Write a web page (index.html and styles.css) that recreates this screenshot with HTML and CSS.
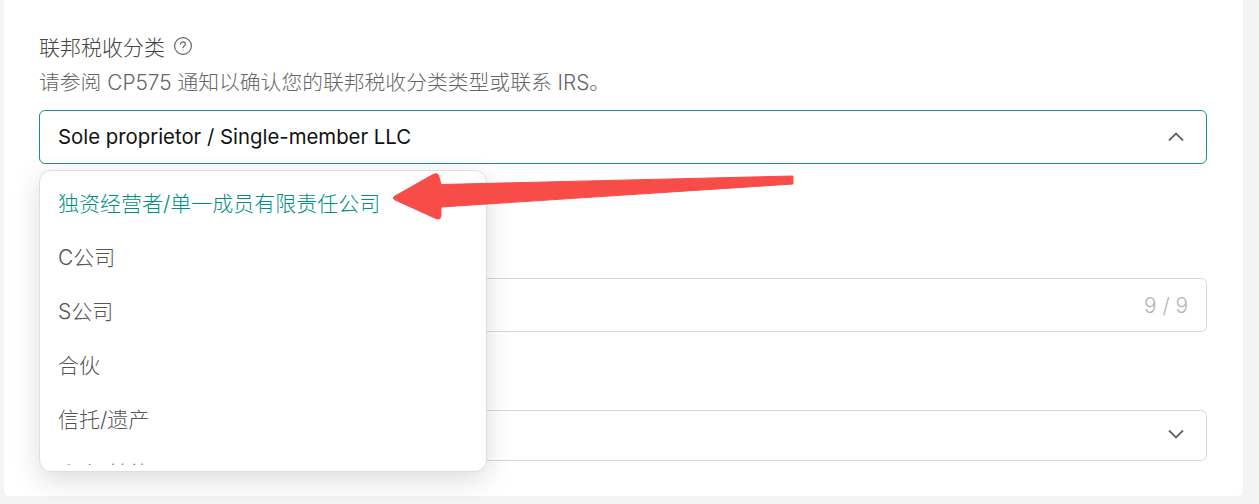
FILE: index.html
```html
<!DOCTYPE html>
<html lang="zh-CN">
<head>
    <meta charset="UTF-8">
    <meta name="viewport" content="width=device-width, initial-scale=1.0">
    <title>联邦税收分类</title>
    <link rel="stylesheet" href="styles.css">
</head>
<body>
    <div class="card">
        <div class="label-row">
            <span>联邦税收分类</span>
            <svg class="help-icon" width="20" height="20" viewBox="0 0 20 20" fill="none" stroke="#666" stroke-width="1.2">
                <circle cx="10" cy="10" r="8.4"/>
                <path d="M7.6 8.2c0-1.4 1-2.3 2.4-2.3s2.4.9 2.4 2.1c0 1.900-2.400 1.900-2.400 3.700" stroke-linecap="round"/>
                <circle cx="10" cy="14" r=".5" fill="#666" stroke="none"/>
            </svg>
        </div>
        <div class="hint">请参阅 CP575 通知以确认您的联邦税收分类类型或联系 IRS。</div>

        <div class="select-box open">
            <span class="select-value">Sole proprietor / Single-member LLC</span>
            <svg class="chevron" width="18" height="18" viewBox="0 0 18 18" fill="none" stroke="#666" stroke-width="1.8">
                <path d="M2 12.500 9 5.500l7 7"/>
            </svg>
        </div>

        <div class="input-box">
            <span class="counter">9 / 9</span>
        </div>

        <div class="select-box lower">
            <svg class="chevron" width="18" height="18" viewBox="0 0 18 18" fill="none" stroke="#666" stroke-width="1.8">
                <path d="M2 3.500 9 10.500 16 3.500"/>
            </svg>
        </div>

        <div class="menu">
            <div class="menu-list">
                <div class="menu-item active">独资经营者/单一成员有限责任公司</div>
                <div class="menu-item">C公司</div>
                <div class="menu-item">S公司</div>
                <div class="menu-item">合伙</div>
                <div class="menu-item">信托/遗产</div>
                <div class="menu-item">个人/其他</div>
            </div>
        </div>
    </div>

    <svg class="arrow" width="420" height="60" viewBox="0 0 420 60">
        <path d="M409 5 L409 13 L57 36 L57 44 Q57 49.500 52 47.500 L11 29 Q7.500 27 11 25 L49 3.500 Q54.500 1 55 6 L57 13.500 Z" fill="#f84c48" stroke="#f84c48" stroke-width="1" stroke-linejoin="round"/>
    </svg>
</body>
</html>
```

FILE: styles.css
```css
* {
    box-sizing: border-box;
}

body {
    margin: 0;
    height: 504px;
    overflow: hidden;
    background-color: #f4f4f4;
    font-family: Inter, "Noto Sans CJK SC", sans-serif;
    font-size: 20px;
    color: #111;
}

.card {
    position: relative;
    width: 1239px;
    height: 496px;
    margin-left: 4px;
    padding: 31px 35px 0;
    background-color: #fff;
    border-radius: 0 0 6px 6px;
}

.label-row {
    display: flex;
    align-items: center;
    gap: 8px;
    height: 30px;
    font-size: 21px;
    font-weight: 300;
    color: #444;
}

.hint {
    height: 34px;
    margin-top: 5px;
    line-height: 34px;
    font-size: 20.800px;
    font-weight: 300;
    color: #666;
}

.select-box {
    display: flex;
    align-items: center;
    justify-content: space-between;
    width: 1168px;
    height: 54px;
    margin-top: 10px;
    padding: 0 21px 0 18px;
    border: 1px solid #d9d9d9;
    border-radius: 6px;
    font-size: 20.350px;
}

.select-value {
    margin-top: -2px;
}

.select-box.open {
    border-color: #1f8f8b;
}

.select-box.lower {
    justify-content: flex-end;
    height: 51px;
    margin-top: 78px;
}

.input-box {
    display: flex;
    align-items: center;
    justify-content: flex-end;
    width: 1168px;
    height: 54px;
    margin-top: 114px;
    padding-right: 18px;
    border: 1px solid #d9d9d9;
    border-radius: 6px;
}

.counter {
    font-size: 20.800px;
    font-weight: 300;
    color: #b4b4b4;
}

/* open dropdown, sits over the fields below */
.menu {
    position: absolute;
    left: 35px;
    top: 170px;
    width: 448px;
    height: 302px;
    padding: 6px 0;
    background-color: #fff;
    border: 1px solid #dedede;
    border-radius: 12px;
    box-shadow: 0 8px 28px rgba(0, 0, 0, 0.14);
}

.menu-list {
    height: 288px;
    overflow: hidden;
}

.menu-item {
    height: 54px;
    padding-left: 18px;
    line-height: 54px;
    font-size: 21px;
    font-weight: 300;
    color: #555;
}

.menu-item.active {
    color: #008f83;
}

.arrow {
    position: absolute;
    left: 384px;
    top: 171px;
}
```
